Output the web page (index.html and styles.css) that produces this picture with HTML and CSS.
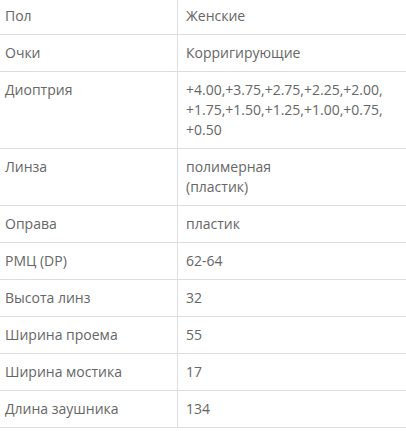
FILE: index.html
```html
<!DOCTYPE html>
<html lang="ru">
<head>
<meta charset="utf-8">
<link rel="stylesheet" href="styles.css">
</head>
<body>
<table class="specs">
  <tr><td class="k">Пол</td><td class="v">Женские</td></tr>
  <tr><td class="k">Очки</td><td class="v">Корригирующие</td></tr>
  <tr><td class="k">Диоптрия</td><td class="v">+4.00,+3.75,+2.75,+2.25,+2.00,<br>+1.75,+1.50,+1.25,+1.00,+0.75,<br>+0.50</td></tr>
  <tr><td class="k">Линза</td><td class="v">полимерная<br>(пластик)</td></tr>
  <tr><td class="k">Оправа</td><td class="v">пластик</td></tr>
  <tr><td class="k">РМЦ (DP)</td><td class="v">62-64</td></tr>
  <tr><td class="k">Высота линз</td><td class="v">32</td></tr>
  <tr><td class="k">Ширина проема</td><td class="v">55</td></tr>
  <tr><td class="k">Ширина мостика</td><td class="v">17</td></tr>
  <tr><td class="k">Длина заушника</td><td class="v">134</td></tr>
</table>
</body>
</html>
```
FILE: styles.css
```css
html, body {
  margin: 0;
  padding: 0;
  background: #fff;
}
.specs {
  width: 406px;
  margin-top: -2px;
  border-collapse: collapse;
  font-family: "Open Sans", "Liberation Sans", sans-serif;
  font-size: 14px;
  line-height: 20px;
  color: #666;
}
.specs td {
  vertical-align: top;
  border-bottom: 1px solid #ddd;
  padding: 8px 8px;
}
.specs .k {
  width: 167px;
  padding-left: 5px;
  padding-right: 5px;
  border-right: 1px solid #ddd;
}
```
